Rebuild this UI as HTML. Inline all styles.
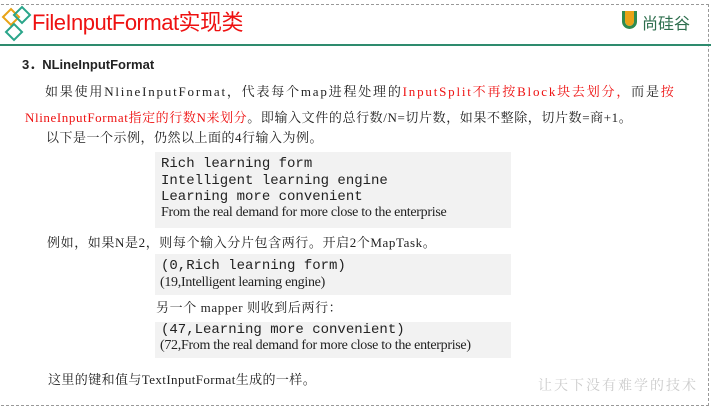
<!DOCTYPE html>
<html><head><meta charset="utf-8"><style>
body{margin:0;width:713px;height:407px;background:#fff;position:relative;overflow:hidden;font-family:"Liberation Serif","Noto Serif CJK SC","Noto Sans CJK SC",serif;color:#222}
.a{position:absolute;white-space:nowrap}
.s{font-family:"Liberation Sans","Noto Sans CJK SC",sans-serif}
.m{font-family:"Liberation Mono",monospace;font-size:14px}
.box{position:absolute;left:155px;width:356px;background:#f2f2f2}
.r{color:#ee1111}
.t{font-size:13px}
.c{font-size:14px;letter-spacing:-0.3px}
</style></head><body>
<div style="position:absolute;left:1px;top:4px;width:707px;height:400px;border:1px dashed #999;border-left:none"></div>
<div style="position:absolute;left:0;top:44px;width:711px;height:2px;background:#2e8b6e"></div>
<svg class="a" style="left:0;top:2px" width="36" height="42" viewBox="0 0 36 42">
<path d="M3 15 L11 7 L19 15 L11 23Z" fill="none" stroke="#e8a317" stroke-width="2"/>
<path d="M14 13 L22 5 L30 13 L22 21Z" fill="none" stroke="#2aa58a" stroke-width="2"/>
<path d="M6 30 L14 22 L22 30 L14 38Z" fill="none" stroke="#2aa58a" stroke-width="2"/>
</svg>
<div class="a s r" style="left:32px;top:5px;font-size:22px;letter-spacing:-0.5px">FileInputFormat实现类</div>
<div class="a" style="left:622px;top:11px;width:15px;height:18px;border:3px solid #2e8b4e;border-top:none;border-radius:0 0 8px 8px;box-sizing:border-box;background:#e8a317;background-clip:content-box"></div>
<div class="a s" style="left:642px;top:10px;font-size:16px;color:#2e6e4e">尚硅谷</div>
<div class="a s" style="left:22px;top:54px;font-size:13px;font-weight:bold">3．NLineInputFormat</div>
<div class="a t" style="left:45px;top:81px;letter-spacing:1.8px">如果使用NlineInputFormat，代表每个map进程处理的<span class="r">InputSplit不再按Block块去划分，</span>而是<span class="r">按</span></div>
<div class="a t" style="left:25px;top:107px;letter-spacing:0.6px"><span class="r">NlineInputFormat指定的行数N来划分</span>。即输入文件的总行数/N=切片数，如果不整除，切片数=商+1。</div>
<div class="a t" style="left:46px;top:127px;letter-spacing:0.5px">以下是一个示例，仍然以上面的4行输入为例。</div>
<div class="box" style="top:152px;height:76px"></div>
<div class="a m" style="left:161px;top:156px">Rich learning form</div>
<div class="a m" style="left:161px;top:173px">Intelligent learning engine</div>
<div class="a m" style="left:161px;top:189px">Learning more convenient</div>
<div class="a c" style="left:161px;top:205px">From the real demand for more close to the enterprise</div>
<div class="a t" style="left:47px;top:232px;letter-spacing:0.6px">例如，如果N是2，则每个输入分片包含两行。开启2个MapTask。</div>
<div class="box" style="top:254px;height:41px"></div>
<div class="a m" style="left:161px;top:258px">(0,Rich learning form)</div>
<div class="a c" style="left:160px;top:275px">(19,Intelligent learning engine)</div>
<div class="a t" style="left:156px;top:297px;letter-spacing:0.6px">另一个 mapper 则收到后两行：</div>
<div class="box" style="top:322px;height:36px"></div>
<div class="a m" style="left:161px;top:322px">(47,Learning more convenient)</div>
<div class="a c" style="left:160px;top:338px">(72,From the real demand for more close to the enterprise)</div>
<div class="a t" style="left:48px;top:369px;letter-spacing:0.4px">这里的键和值与TextInputFormat生成的一样。</div>
<div class="a" style="left:538px;top:375px;font-size:14px;color:#ccc;letter-spacing:2px">让天下没有难学的技术</div>
</body></html>
